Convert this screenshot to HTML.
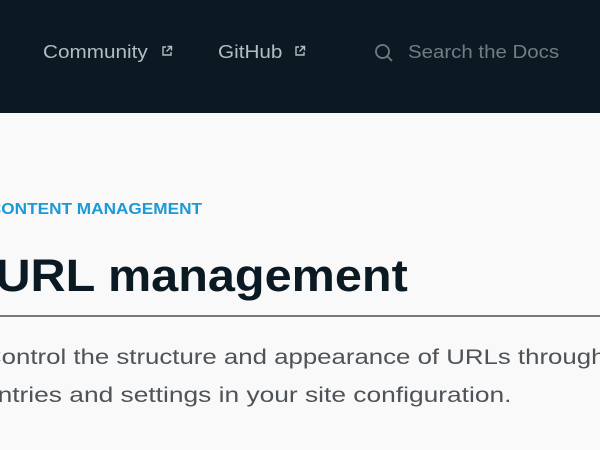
<!DOCTYPE html>
<html><head><meta charset="utf-8"><style>
html,body{margin:0;padding:0;width:600px;height:450px;overflow:hidden;background:#f9f9f9;font-family:"Liberation Sans",sans-serif;position:relative}
.hdr{position:absolute;left:0;top:0;width:600px;height:113px;background:#0b1923}
.n{position:absolute;top:40px;font-size:18px;color:#b3bcc3;white-space:nowrap;line-height:24px;transform:scaleX(1.15);transform-origin:left center}
.s{color:#737c84;transform:scaleX(1.135)}
.a{position:absolute;white-space:nowrap}
.eb{right:398px;top:201px;font-size:15.5px;font-weight:bold;color:#1a9ad6;transform:scaleX(1.11);transform-origin:right center}
.h{right:192px;top:248px;font-size:45px;font-weight:bold;color:#0b1923;line-height:56px;transform:scaleX(1.08);transform-origin:right center}
.rule{position:absolute;left:0;top:315px;width:600px;height:2px;background:#777}
.p{font-size:21.5px;color:#4d5358;line-height:28px;transform:scaleX(1.2)}
</style></head><body>
<div class="hdr">
<div class="n" style="left:43px">Community</div>
<svg style="position:absolute;left:161px;top:45px" width="12" height="12" viewBox="0 0 12 12" fill="none" stroke="#b3bcc3" stroke-width="1.4"><path d="M5 2H2v8h8V7"/><path d="M6.5 1.5h4v4M10.5 1.5L5.5 6.5"/></svg>
<div class="n" style="left:218px">GitHub</div>
<svg style="position:absolute;left:294px;top:45px" width="12" height="12" viewBox="0 0 12 12" fill="none" stroke="#b3bcc3" stroke-width="1.4"><path d="M5 2H2v8h8V7"/><path d="M6.5 1.5h4v4M10.5 1.5L5.5 6.5"/></svg>
<svg style="position:absolute;left:374px;top:43px" width="20" height="20" viewBox="0 0 20 20" fill="none" stroke="#737c84" stroke-width="1.8"><circle cx="8.5" cy="8.5" r="6.5"/><path d="M13.3 13.3L18 18"/></svg>
<div class="n s" style="left:408px">Search the Docs</div>
</div>
<div class="a eb">CONTENT MANAGEMENT</div>
<div class="a h">URL management</div>
<div class="rule"></div>
<div class="a p" style="left:-17px;top:343px;transform-origin:left center">Control the structure and appearance of URLs through</div>
<div class="a p" style="right:89px;top:381px;transform-origin:right center;transform:scaleX(1.225)">entries and settings in your site configuration.</div>
</body></html>
